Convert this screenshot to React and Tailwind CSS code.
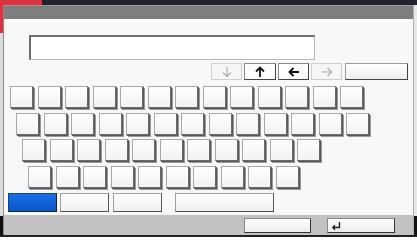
import React from "react";

const Key = ({ w = "w-[23px]", h = "h-[22px]" }) => (
  <div
    className={`${w} ${h} shrink-0 border border-[#a8a8a8] border-r-[#6a6a6a] border-b-[#6a6a6a] bg-gradient-to-b from-white to-[#f2f2f2] shadow-[1px_1px_0_#5a5a5a,2px_2px_0_#9a9a9a]`}
  />
);

const Row = ({ n, ml }) => (
  <div className={`flex gap-[4.5px] ${ml}`}>
    {Array.from({ length: n }).map((_, i) => (
      <Key key={i} />
    ))}
  </div>
);

const Arrow = ({ dir, dark }) => {
  const c = dark ? "#111" : "#a8a8a8";
  const sw = dark ? 1.8 : 1.1;
  const rot = { up: 0, down: 180, left: 270, right: 90 }[dir];
  return (
    <svg width="12" height="12" viewBox="0 0 12 12" style={{ transform: `rotate(${rot}deg)` }}>
      <path d="M6 11V1.5M2 5.5L6 1.5L10 5.5" fill="none" stroke={c} strokeWidth={sw} />
    </svg>
  );
};

export default function App() {
  return (
    <div className="w-[417px] h-[250px] bg-white flex flex-col overflow-hidden" style={{ fontFamily: "'Liberation Sans', sans-serif" }}>
      <div className="h-[5px] flex shrink-0">
        <div className="w-[42px] bg-[#d93440]" />
        <div className="flex-1 bg-[#22232e]" />
      </div>
      <div className="flex h-[230px] shrink-0">
        <div className="w-[3px] flex flex-col">
          <div className="h-[28px] bg-[#d93440]" />
          <div className="flex-1 bg-[#dcdcdc]" />
          <div className="h-[19px] bg-[#111]" />
        </div>
        <div className="flex-1 flex flex-col border-l border-[#8a8a8a] border-r border-r-[#b0b0b0]">
          <div className="h-[14px] bg-[#7e7e7e] border-t border-[#9a9a9a] shrink-0" />
          <div className="flex-1 bg-[#f8f8f8] flex flex-col">
            <div className="mt-[16px] ml-[25px] w-[286px] h-[25px] bg-white border border-[#b8b8b8] border-t-2 border-l-2 border-t-[#6e6e6e] border-l-[#6e6e6e]" />
            <div className="mt-[3px] flex gap-[2px] ml-[207px]">
              <div className="w-[31px] h-[17px] border border-[#cfcfcf] bg-[#f6f6f6] flex items-center justify-center">
                <Arrow dir="down" />
              </div>
              <div className="w-[32px] h-[17px] border border-[#8a8a8a] border-r-[#444] border-b-[#444] bg-white flex items-center justify-center">
                <Arrow dir="up" dark />
              </div>
              <div className="w-[31px] h-[17px] border border-[#8a8a8a] border-r-[#444] border-b-[#444] bg-white flex items-center justify-center">
                <Arrow dir="left" dark />
              </div>
              <div className="w-[31px] h-[17px] border border-[#cfcfcf] bg-[#f6f6f6] flex items-center justify-center">
                <Arrow dir="right" />
              </div>
              <div className="ml-[1px] w-[63px] h-[17px] border border-[#9a9a9a] border-r-[#444] border-b-[#444] bg-gradient-to-b from-white to-[#eeeeee]" />
            </div>
            <div className="mt-[6px] flex flex-col gap-[4.5px]">
              <Row n={13} ml="ml-[6px]" />
              <Row n={13} ml="ml-[12px]" />
              <Row n={11} ml="ml-[18px]" />
              <Row n={10} ml="ml-[24px]" />
            </div>
            <div className="mt-[5.5px] flex ml-[4px]">
              <div className="w-[49px] h-[19px] bg-gradient-to-b from-[#1a6fe6] to-[#0a55c8] border border-[#0a3f9a] border-r-[#222] border-b-[#222]" />
              <div className="ml-[3px] w-[49px] h-[19px] border border-[#a0a0a0] border-r-[#555] border-b-[#555] bg-gradient-to-b from-white to-[#f0f0f0]" />
              <div className="ml-[4px] w-[49px] h-[19px] border border-[#a0a0a0] border-r-[#555] border-b-[#555] bg-gradient-to-b from-white to-[#f0f0f0]" />
              <div className="ml-[13px] w-[99px] h-[19px] border border-[#a0a0a0] border-r-[#555] border-b-[#555] bg-gradient-to-b from-white to-[#f0f0f0]" />
            </div>
          </div>
          <div className="h-[20px] bg-[#c2c2c2] shrink-0 flex items-center pt-[1px]">
            <div className="ml-[240px] w-[67px] h-[15px] border border-[#888] border-r-[#333] border-b-[#333] bg-gradient-to-b from-white to-[#ececec]" />
            <div className="ml-[16px] w-[68px] h-[15px] border border-[#888] border-r-[#333] border-b-[#333] bg-gradient-to-b from-white to-[#ececec] flex items-center pl-[3px]">
              <svg width="10" height="10" viewBox="0 0 10 10">
                <path d="M8.5 1V6.5H2M4 4.3L1.8 6.5L4 8.7" fill="none" stroke="#222" strokeWidth="1.4" />
              </svg>
            </div>
          </div>
        </div>
        <div className="w-[3px] flex flex-col">
          <div className="flex-1 bg-[#e8e8e8]" />
          <div className="h-[19px] bg-[#111]" />
        </div>
      </div>
      <div className="h-[2px] bg-[#222] shrink-0" />
      <div className="flex-1 bg-white" />
    </div>
  );
}
